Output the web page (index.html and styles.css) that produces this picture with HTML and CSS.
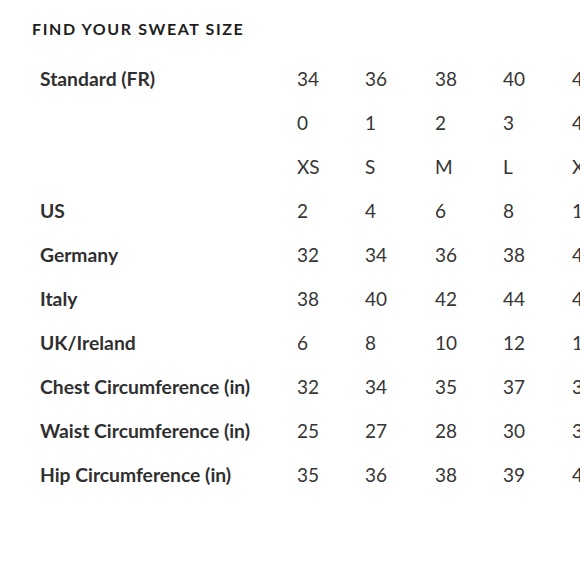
FILE: index.html
```html
<!DOCTYPE html>
<html>
<head>
<meta charset="utf-8">
<link rel="stylesheet" href="styles.css">
</head>
<body>
<div class="page">
  <h1 class="title">FIND YOUR SWEAT SIZE</h1>
  <div class="chart">
    <div class="label">Standard (FR)</div><div>34</div><div>36</div><div>38</div><div>40</div><div>42</div>
    <div class="label"></div><div>0</div><div>1</div><div>2</div><div>3</div><div>4</div>
    <div class="label"></div><div>XS</div><div>S</div><div>M</div><div>L</div><div>XL</div>
    <div class="label">US</div><div>2</div><div>4</div><div>6</div><div>8</div><div>10</div>
    <div class="label">Germany</div><div>32</div><div>34</div><div>36</div><div>38</div><div>40</div>
    <div class="label">Italy</div><div>38</div><div>40</div><div>42</div><div>44</div><div>46</div>
    <div class="label">UK/Ireland</div><div>6</div><div>8</div><div>10</div><div>12</div><div>14</div>
    <div class="label">Chest Circumference (in)</div><div>32</div><div>34</div><div>35</div><div>37</div><div>39</div>
    <div class="label">Waist Circumference (in)</div><div>25</div><div>27</div><div>28</div><div>30</div><div>32</div>
    <div class="label">Hip Circumference (in)</div><div>35</div><div>36</div><div>38</div><div>39</div><div>41</div>
  </div>
</div>
</body>
</html>
```
FILE: styles.css
```css
html, body {
  margin: 0;
  padding: 0;
  background: #ffffff;
  overflow: hidden;
}
.page {
  width: 580px;
  height: 580px;
  overflow: hidden;
  padding: 19px 0 0 32px;
  box-sizing: border-box;
  font-family: Lato, "Liberation Sans", sans-serif;
  color: #353535;
}
.title {
  margin: 0 0 17px 0;
  font-size: 16px;
  line-height: 20px;
  font-weight: 700;
  letter-spacing: 1.6px;
  color: #1e1e1e;
  white-space: nowrap;
}
.chart {
  display: grid;
  grid-template-columns: 257px 68px 70px 68px 69px 69px;
  grid-auto-rows: 44px;
  margin-left: 8px;
  font-size: 19px;
  width: max-content;
}
.chart > div {
  display: flex;
  align-items: center;
  white-space: nowrap;
}
.label {
  font-weight: 700;
  font-size: 19.3px;
  color: #2f2f2f;
}
```
